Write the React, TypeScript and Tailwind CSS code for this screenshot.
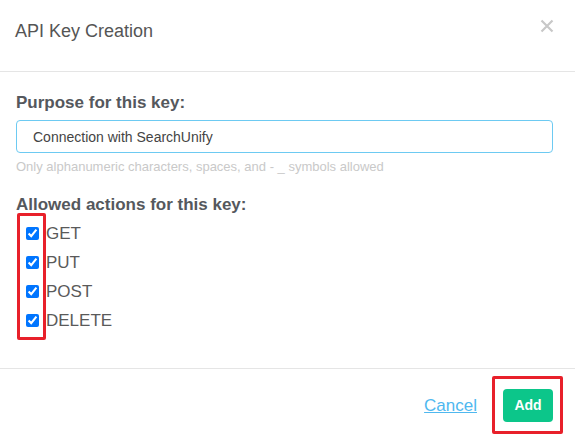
import React from 'react';

const actions = ['GET', 'PUT', 'POST', 'DELETE'];

export default function App() {
  return (
    <div className="w-[575px] h-[439px] bg-white font-['Liberation_Sans',Arial,sans-serif] text-[#555] overflow-hidden">
      {/* header */}
      <div className="h-[72px] border-b border-[#e5e5e5] pl-[15px] pr-[21px] pt-[19px] flex items-start justify-between">
        <h2 className="text-[18px] leading-[24px] text-[#555]">API Key Creation</h2>
        <button className="flex text-[#c8c8c8]">
          <svg width="14" height="14" viewBox="0 0 14 14" className="block">
            <path d="M1.5 1.5 L12.5 12.5 M12.5 1.5 L1.5 12.5" stroke="currentColor" strokeWidth="2.2" />
          </svg>
        </button>
      </div>

      {/* body */}
      <div className="h-[297px] border-b border-[#e5e5e5] pl-[16px] pr-[22px] pt-[21px]">
        <label className="block text-[17px] leading-[19px] font-bold text-[#55585d] mb-[8px]">
          Purpose for this key:
        </label>
        <input
          defaultValue="Connection with SearchUnify"
          className="block w-full h-[33px] border border-[#6dcaf2] rounded-[4px] pl-[16px] text-[14px] text-[#444] outline-none"
        />
        <p className="mt-[6px] text-[13px] leading-[15px] text-[#c9c9c9]">
          Only alphanumeric characters, spaces, and - _ symbols allowed
        </p>

        <label className="block mt-[21px] text-[17px] leading-[19px] font-bold text-[#55585d]">
          Allowed actions for this key:
        </label>
        <div className="relative mt-[5px]">
          {actions.map((a) => (
            <label key={a} className="flex items-center h-[29px] pl-[10px]">
              <input type="checkbox" defaultChecked className="w-[13px] h-[13px] m-0 accent-[#0075ff]" />
              <span className="ml-[7px] text-[17px] text-[#5a5a5a]">{a}</span>
            </label>
          ))}
          <div className="absolute left-[1px] top-[-6px] w-[29px] h-[127px] border-[3px] border-[#e8202a] rounded-[2px]" />
        </div>
      </div>

      {/* footer */}
      <div className="flex items-center justify-end pt-[20px] pr-[22px]">
        <a href="#" className="text-[17px] text-[#4fb8ef] underline mr-[26px]">
          Cancel
        </a>
        <div className="relative">
          <button className="w-[50px] h-[33px] rounded-[4px] bg-[#0cc68a] text-white text-[14px] font-bold">
            Add
          </button>
          <div className="absolute -left-[11px] -right-[10px] -top-[13px] -bottom-[12px] border-[3px] border-[#e8202a] rounded-[2px]" />
        </div>
      </div>
    </div>
  );
}
